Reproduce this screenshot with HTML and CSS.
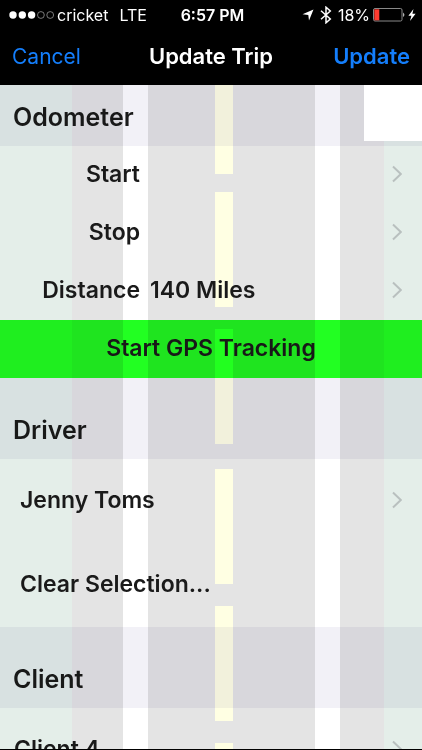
FILE: index.html
```html
<!DOCTYPE html>
<html lang="en">
<head>
<meta charset="utf-8">
<meta name="viewport" content="width=device-width, initial-scale=1">
<title>Update Trip</title>
<link rel="stylesheet" href="styles.css">
</head>
<body>
<div class="screen">
  <header class="top">
    <div class="status">
      <div class="status-left">
        <svg class="signal" width="46" height="10" viewBox="0 0 46 10" aria-hidden="true">
          <g fill="#fff"><circle cx="4" cy="5" r="3.7"/><circle cx="13.3" cy="5" r="3.7"/><circle cx="22.6" cy="5" r="3.7"/></g>
          <g fill="none" stroke="#aaa" stroke-width=".7"><circle cx="31.9" cy="5" r="3.4"/><circle cx="41.2" cy="5" r="3.4"/></g>
        </svg>
        <span class="carrier">cricket</span>
        <span>LTE</span>
      </div>
      <span class="clock">6:57 PM</span>
      <div class="status-right">
        <svg width="12" height="12" viewBox="0 0 12 12" aria-hidden="true"><path d="M11.5.5 7 11.5 6.3 6 .5 5.3Z" fill="#fff"/></svg>
        <svg class="bluetooth" width="12" height="18" viewBox="0 0 12 18" aria-hidden="true"><path d="M1 4.8 10.3 13 6 16.8V1.2L10.3 5 1 13.2" fill="none" stroke="#fff" stroke-width="1.5"/></svg>
        <span class="charge">18%</span>
        <svg width="33" height="14" viewBox="0 0 33 14" aria-hidden="true">
          <rect x=".5" y=".5" width="28.5" height="12.5" rx="1.5" fill="none" stroke="#999" stroke-width=".9"/>
          <rect x="1.3" y="1.3" width="5" height="11" fill="#ff3b30"/>
          <path d="M30.3 4.5q2 2.3 0 4.6Z" fill="#fff"/>
        </svg>
        <svg class="bolt" width="8" height="12" viewBox="0 0 8 12" aria-hidden="true"><path d="M5.5 0 .4 6.8H3.4L2 12 7.6 4.8H4.4Z" fill="#fff"/></svg>
      </div>
    </div>
    <nav class="nav">
      <button type="button" class="nav-button">Cancel</button>
      <h1>Update Trip</h1>
      <button type="button" class="nav-button save">Update</button>
    </nav>
  </header>

  <main class="content">
    <div class="road" aria-hidden="true">
      <div class="grass"></div><div></div><div class="line"></div><div></div>
      <div class="dashes"><i></i><i></i><i></i><i></i><i></i><i></i></div>
      <div></div><div class="line"></div><div></div><div class="grass"></div>
    </div>

    <div class="panel"></div>

    <section>
      <h2 class="first">Odometer</h2>
      <button type="button" class="row"><span class="label">Start</span><svg class="chevron" viewBox="0 0 10 18"><path d="M1 1.5 8.8 9 1 16.5"/></svg></button>
      <button type="button" class="row"><span class="label">Stop</span><svg class="chevron" viewBox="0 0 10 18"><path d="M1 1.5 8.8 9 1 16.5"/></svg></button>
      <button type="button" class="row"><span class="label">Distance</span><span>140 Miles</span><svg class="chevron" viewBox="0 0 10 18"><path d="M1 1.5 8.8 9 1 16.5"/></svg></button>
      <button type="button" class="row gps">Start GPS Tracking</button>
    </section>

    <section>
      <h2>Driver</h2>
      <button type="button" class="row tall">Jenny Toms<svg class="chevron" viewBox="0 0 10 18"><path d="M1 1.5 8.8 9 1 16.5"/></svg></button>
      <button type="button" class="row tall">Clear Selection...</button>
    </section>

    <section>
      <h2>Client</h2>
      <button type="button" class="row tall client">Client 4<svg class="chevron" viewBox="0 0 10 18"><path d="M1 1.5 8.8 9 1 16.5"/></svg></button>
    </section>
  </main>
</div>
</body>
</html>
```
FILE: styles.css
```css
* {
  box-sizing: border-box;
}

body {
  margin: 0;
  background: #000;
  color: #1a1a1a;
  font-family: Inter, "Liberation Sans", sans-serif;
}

.screen {
  display: flex;
  flex-direction: column;
  height: 100vh;
  border-bottom: 1px solid #000;
}

.top {
  flex: none;
  background: #000;
  color: #fff;
}

.status {
  display: grid;
  grid-template-columns: 1fr auto 1fr;
  align-items: center;
  height: 29px;
  padding: 0 6px 0 9px;
  font-size: 16px;
}

.status-left,
.status-right {
  display: flex;
  align-items: center;
}

.carrier {
  margin: 0 11px 0 2px;
}

.clock {
  font-weight: 600;
}

.status-right {
  justify-content: flex-end;
}

.bluetooth {
  margin: 0 6px;
}

.charge {
  margin-right: 3px;
}

.bolt {
  margin-left: 2px;
}

.nav {
  display: grid;
  grid-template-columns: 1fr auto 1fr;
  align-items: center;
  height: 56px;
  padding: 0 12px 2px;
}

h1 {
  margin: 0;
  font-size: 22px;
  font-weight: 600;
}

button {
  border: 0;
  background: none;
  color: inherit;
  font: inherit;
  cursor: pointer;
}

.nav-button {
  justify-self: start;
  padding: 0;
  color: #147efb;
  font-size: 21px;
}

.save {
  justify-self: end;
  font-size: 22px;
  font-weight: 600;
}

.content {
  position: relative;
  flex: 1;
  min-height: 0;
  overflow: hidden;
  background: #e4e4e4;
}

/* Road artwork behind the list */
.road {
  position: absolute;
  inset: 0;
  display: grid;
  grid-template-columns: 72fr 51fr 25fr 67fr 18fr 82fr 25fr 44fr 38fr;
}

.grass {
  background: #e4eee9;
}

.line {
  background: #fff;
}

.dashes {
  overflow: hidden;
}

.dashes i {
  display: block;
  height: 115px;
  margin-bottom: 22px;
  background: #ffffe3;
}

.dashes i:first-child {
  height: 89px;
  margin-bottom: 18px;
}

.dashes i:nth-child(3) {
  margin-bottom: 25px;
}

.panel {
  position: absolute;
  top: 0;
  right: 0;
  z-index: 1;
  width: 58px;
  height: 56px;
  background: #fff;
}

h2 {
  position: relative;
  display: flex;
  align-items: flex-end;
  height: 81px;
  margin: 0;
  padding: 0 13px 13px;
  background: #f2f1f7;
  font-size: 25px;
  font-weight: 600;
  line-height: 32px;
  mix-blend-mode: multiply;
}

.first {
  height: 61px;
}

.row {
  position: relative;
  display: flex;
  align-items: center;
  gap: 10px;
  width: 100%;
  height: 58px;
  padding: 0 20px 2px 0;
  font-size: 23px;
  font-weight: 600;
  text-align: left;
}

.label {
  width: 140px;
  text-align: right;
}

.gps {
  justify-content: center;
  padding: 0 0 2px;
  background: #22ff22;
  mix-blend-mode: multiply;
}

.tall {
  height: 84px;
  padding-left: 20px;
}

.client {
  padding-left: 14px;
}

.chevron {
  width: 10px;
  height: 18px;
  margin-left: auto;
  fill: none;
  stroke: #b9c0bf;
  stroke-width: 2;
}
```
